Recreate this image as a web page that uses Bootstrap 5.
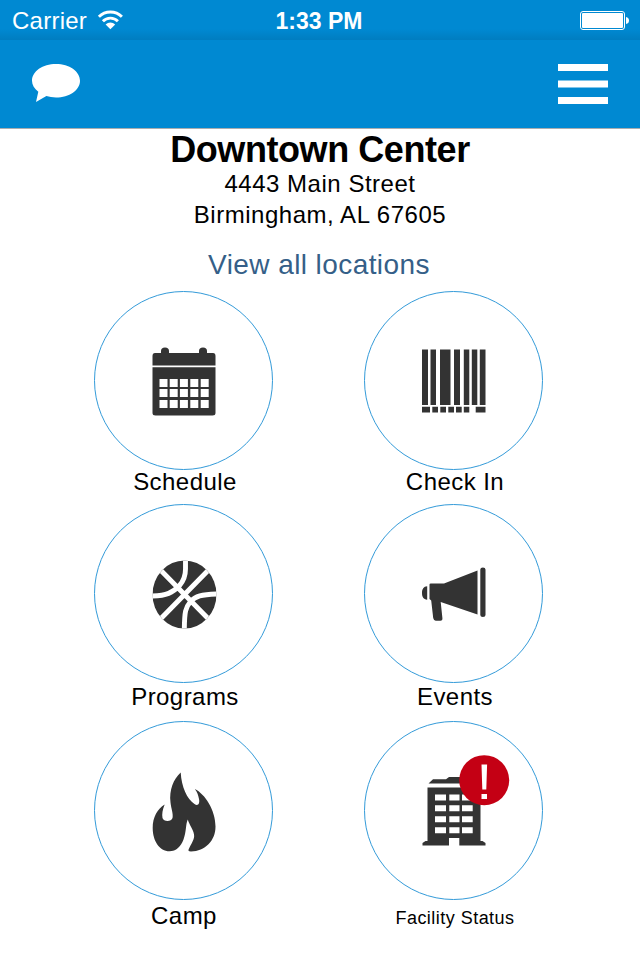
<!DOCTYPE html>
<html lang="en">
<head>
<meta charset="utf-8">
<meta name="viewport" content="width=device-width, initial-scale=1">
<title>Downtown Center</title>
<link href="https://cdn.jsdelivr.net/npm/bootstrap@5.3.0/dist/css/bootstrap.min.css" rel="stylesheet">
<style>
body{font-family:"Liberation Sans",Arial,sans-serif;color:#000;background:#fff;width:640px;height:960px;overflow:hidden}
svg{display:block;flex:none}
.status{height:40px;padding:0 11px 0 12px;font-size:24px;line-height:40px;background:linear-gradient(#0089d2 0,#0089d2 29px,#007dc0 40px);color:#fff}
.carrier,.power{flex:1 1 0}
.carrier{letter-spacing:.25px}
.carrier span,.clock{padding-top:2px}
.clock{font-size:23px;font-weight:700;margin-right:3px}
.topbar{height:89px;padding:0 32px;background:#0089d2;border-bottom:1px solid #a9adb0}
.topbar button{line-height:0}
.place{font-size:36px;line-height:42px;font-weight:700;letter-spacing:-.43px}
.address{font-size:24px;line-height:31px;letter-spacing:.52px;margin-top:-3px}
.all-link{font-size:28px;line-height:34px;letter-spacing:.42px;color:#355f88;margin:18px 2px 0 0}
.tiles{display:grid;grid-template-columns:180px 180px;column-gap:90px;grid-template-rows:213px 217px 217px;padding:9px 0 0 94px}
.tile{color:#000}
.ring{width:179px;height:179px;border:1px solid #349bd9}
.ring>svg{margin-left:1px;margin-top:1px}
.ring>.drop{margin-top:3px}
.label{font-size:24px;line-height:24px;letter-spacing:.45px;margin-left:2px}
.label-low{margin-top:2px}
.label-camp{margin:4px 0 0}
.label-sm{font-size:18px;letter-spacing:.47px;margin-top:6px}
.ring>.alert-dot{left:94px;top:33px;width:51px;height:51px;margin:0}
</style>
<script src="https://cdn.jsdelivr.net/npm/bootstrap@5.3.0/dist/js/bootstrap.bundle.min.js"></script>
</head>
<body>
<header>
  <div class="status d-flex align-items-center">
    <div class="d-flex align-items-center carrier"><span>Carrier</span>
      <svg class="ms-2" width="30" height="22" viewBox="0 0 30 22"><g fill="none" stroke="#fff" stroke-width="2.9"><path d="M3.900 7.800C10.200 1.400 20.600 1.400 26.900 7.800"/><path d="M7.900 12.200c4.100-4.100 10.900-4.100 15 0"/></g><path d="M10.600 15.400c2.800-2.700 6.800-2.700 9.600 0l-4.800 4.900z" fill="#fff"/></svg>
    </div>
    <div class="clock text-center">1:33 PM</div>
    <div class="power d-flex justify-content-end">
      <svg width="50" height="20" viewBox="0 0 50 20"><rect x="1.500" y="1.500" width="44" height="18" rx="2.500" fill="none" stroke="#fff"/><rect x="3" y="3" width="41" height="15" rx="1" fill="#fff"/><path d="M47 7q3 .5 3 3.500t-3 3.500z" fill="#fff"/></svg>
    </div>
  </div>
  <nav class="topbar d-flex align-items-center justify-content-between">
    <button class="btn p-0 border-0" aria-label="Messages"><svg width="48" height="40" viewBox="0 0 48 40"><path d="M24 0c13.300 0 24 7.400 24 16.700S37.300 33.500 24 33.500c-3.400 0-6.700-.5-9.600-1.400L4 38l2.300-10.300C2.400 24.700 0 21 0 16.700 0 7.400 10.700 0 24 0z" fill="#fff"/></svg></button>
    <button class="btn p-0 border-0" aria-label="Menu"><svg width="50" height="40" viewBox="0 0 50 40"><path d="M0 0h50v7H0zM0 16.400h50v7.200H0zM0 33h50v7H0z" fill="#fff"/></svg></button>
  </nav>
</header>
<main>
  <section class="text-center">
    <h1 class="place m-0">Downtown Center</h1>
    <div class="address">4443 Main Street<br>Birmingham, AL 67605</div>
    <a href="#" class="all-link d-block text-decoration-none">View all locations</a>
  </section>
  <section class="tiles">
    <a href="#" class="tile d-flex flex-column align-items-center text-decoration-none">
      <div class="ring align-self-start rounded-circle d-flex align-items-center justify-content-center">
        <svg class="drop" width="64" height="70" viewBox="0 0 64 70"><path fill="#333" d="M3 6h6V4q0-3.500 4-3.500t4 3.500v2h30V4q0-3.500 4-3.500t4 3.500v2h6q2.500 0 2.500 3v9.500h-63V9q0-3 2.500-3zM.5 20.200h63V66q0 2.500-3 2.500h-57Q.5 68.500.5 66z"/><g fill="#fff"><path id="days" d="M7.500 32h8v8h-8zM17.700 32h8v8h-8zM27.900 32h8v8h-8zM38.300 32h8v8h-8zM48.700 32h8v8h-8z"/><use href="#days" y="10"/><use href="#days" y="21"/></g></svg>
      </div>
      <span class="label">Schedule</span>
    </a>
    <a href="#" class="tile d-flex flex-column align-items-center text-decoration-none">
      <div class="ring align-self-start rounded-circle d-flex align-items-center justify-content-center">
        <svg width="64" height="64" viewBox="0 0 64 64"><path fill="#333" d="M0 .5h6v55.500H0zM8.500.5h5.500v55.500H8.500zM18 .5h10.500v55.500H18zM32 .5h6v55.500h-6zM41.800.5h5.500v55.500h-5.500zM49.800.5h5.500v55.500h-5.500zM57.800.5h5.700v55.500h-5.700zM0 57.800h8v5.700H0zM10.300 57.800h5.700v5.700h-5.700zM18.300 57.800h5.700v5.700h-5.700zM26.300 57.800h5.700v5.700h-5.700zM34 57.800h5.700v5.700H34zM41.800 57.800h5.500v5.700h-5.500zM53.700 57.800h9.800v5.700h-9.800z"/></svg>
      </div>
      <span class="label">Check In</span>
    </a>
    <a href="#" class="tile d-flex flex-column align-items-center text-decoration-none">
      <div class="ring align-self-start rounded-circle d-flex align-items-center justify-content-center">
        <svg class="drop" width="65" height="70" viewBox="0 0 64 70"><defs><clipPath id="ball"><ellipse cx="32" cy="34.500" rx="32" ry="34"/></clipPath></defs><g clip-path="url(#ball)"><path fill="#333" d="M0 0h64v70H0z"/><path fill="none" stroke="#fff" stroke-width="4.900" d="M7 9l50 51M57 9L7 60M33 0v9c0 7-2 12-6 16.500-7 7.500-13 10-27 10.500M64 34c-15 .5-21 2-26 7.500-5 6-6 10-6.200 28.500"/></g></svg>
      </div>
      <span class="label label-low">Programs</span>
    </a>
    <a href="#" class="tile d-flex flex-column align-items-center text-decoration-none">
      <div class="ring align-self-start rounded-circle d-flex align-items-center justify-content-center">
        <svg width="64" height="54" viewBox="0 0 64 54"><path fill="#333" d="M5.200 19.300v13.400C1.600 32.300 0 30 0 26s1.600-6.500 5.200-6.700zM8.800 16.500H22L55.500 3.500v44L18.700 35l1.700 16q.3 2.700-2 2.700h-4.700q-2 0-2.500-2.700L9.200 33.500 7.500 32V17.500q0-1 1.300-1zM58.300 2.500q0-2 2.600-2t2.600 2V48q0 2-2.600 2t-2.600-2z"/></svg>
      </div>
      <span class="label label-low">Events</span>
    </a>
    <a href="#" class="tile d-flex flex-column align-items-center text-decoration-none">
      <div class="ring align-self-start rounded-circle d-flex align-items-center justify-content-center">
        <svg class="drop" width="64" height="80" viewBox="0 0 64 80"><path fill="#333" d="M28.700.5C29.500 15 35 27 42.500 32c3.500 2.500 5.500-.5 4.500-5-.6-3.500-1.800-7-4.200-10C53 22 63.500 38 63.500 54.500 63.500 69 53 79 39 79.500c-2.500 0-3-.8-2.200-2.500C39 72 43 67 42 62.500c-.8-5.500-4.500-9-6.200-15-2.300 5-1.300 12-4.300 20C29 74.500 24 79.300 17.500 79.300 7.500 79.300.7 69 .7 56 .7 45 5.500 37 12.700 32.500 10.500 38 9.800 42 10.500 46c1 4 9 4 10 0 1-4-1.500-10-2-15.500C17 18 21.500 7 28.700.5z"/></svg>
      </div>
      <span class="label label-camp">Camp</span>
    </a>
    <a href="#" class="tile d-flex flex-column align-items-center text-decoration-none">
      <div class="ring align-self-start rounded-circle position-relative d-flex align-items-center justify-content-center">
        <svg width="64" height="70" viewBox="0 0 64 70"><path fill="#333" d="M6.500 7.500L11 3.200h13L27 1h12l3 2.200h11l4.500 4.300zM5.500 11.500h53V65h2l3 2v2.500H37.300V62H27v7.500H.5V67l3-2h2z"/><g fill="#fff"><path id="panes" d="M13 18.500h11V24.500H13zM27.300 18.500H37.500V24.500H27.300zM40 18.500H50.700V24.500H40z"/><use href="#panes" y="10.700"/><use href="#panes" y="21.700"/><use href="#panes" y="32.700"/></g></svg>
        <svg class="alert-dot position-absolute" viewBox="0 0 51 51"><circle cx="25.200" cy="25.200" r="25" fill="#c40014"/><path fill="#fff" d="M22.500 9.500h5.600l-.8 25h-4zM22.500 39H28v5h-5.500z"/></svg>
      </div>
      <span class="label label-sm">Facility Status</span>
    </a>
  </section>
</main>
</body>
</html>
